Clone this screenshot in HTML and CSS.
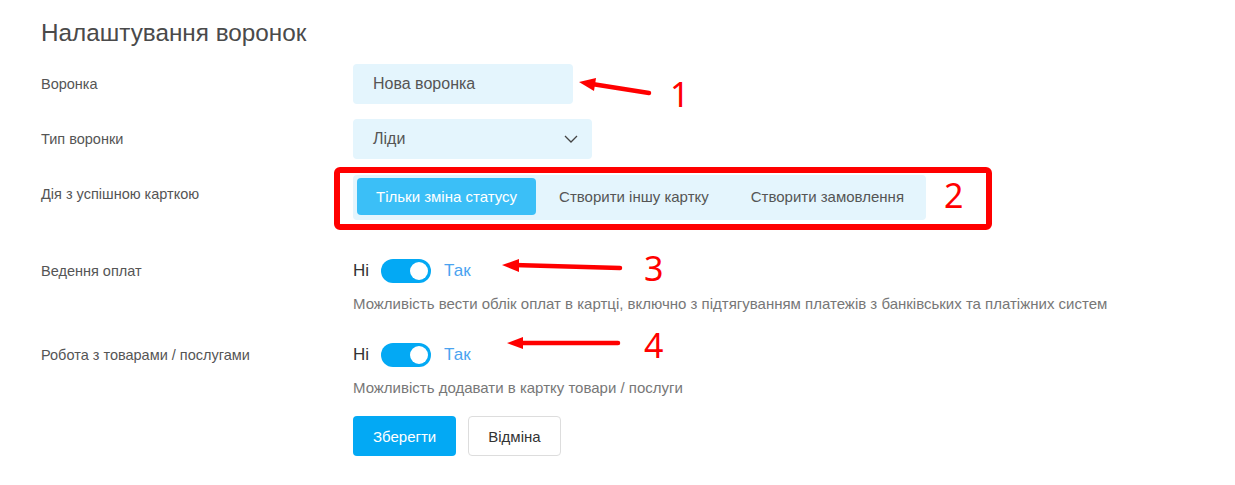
FILE: index.html
```html
<!DOCTYPE html>
<html>
<head>
  <meta name="viewport" content="width=device-width, initial-scale=1.0">
  <link rel="stylesheet" href="styles.css">
</head>
<body>

  <div class="settings">
    <h1 class="settings-title">Налаштування воронок</h1>

    <div class="form-row">
      <div class="form-label">Воронка</div>
      <div class="form-field">
        <div class="text-input">Нова воронка</div>
      </div>
    </div>

    <div class="form-row">
      <div class="form-label">Тип воронки</div>
      <div class="form-field">
        <div class="select-input">
          <span>Ліди</span>
          <svg class="chevron" width="14" height="8" viewBox="0 0 14 8">
            <path d="M1 1 L7 7 L13 1" fill="none" stroke="#444" stroke-width="1.3"/>
          </svg>
        </div>
      </div>
    </div>

    <div class="form-row row-segment">
      <div class="form-label">Дія з успішною карткою</div>
      <div class="form-field">
        <div class="segment">
          <div class="segment-item active">Тільки зміна статусу</div>
          <div class="segment-item">Створити іншу картку</div>
          <div class="segment-item">Створити замовлення</div>
        </div>
      </div>
    </div>

    <div class="form-row row-toggle">
      <div class="form-label">Ведення оплат</div>
      <div class="form-field">
        <div class="toggle-line">
          <span class="toggle-no">Ні</span>
          <span class="toggle on"><span class="knob"></span></span>
          <span class="toggle-yes">Так</span>
        </div>
        <div class="hint">Можливість вести облік оплат в картці, включно з підтягуванням платежів з банківських та платіжних систем</div>
      </div>
    </div>

    <div class="form-row row-toggle row-goods">
      <div class="form-label">Робота з товарами / послугами</div>
      <div class="form-field">
        <div class="toggle-line">
          <span class="toggle-no">Ні</span>
          <span class="toggle on"><span class="knob"></span></span>
          <span class="toggle-yes">Так</span>
        </div>
        <div class="hint">Можливість додавати в картку товари / послуги</div>
      </div>
    </div>

    <div class="form-row row-actions">
      <div class="form-label"></div>
      <div class="form-field actions">
        <button class="btn btn-primary">Зберегти</button>
        <button class="btn btn-default">Відміна</button>
      </div>
    </div>
  </div>

  <!-- annotations drawn over the screenshot -->
  <svg class="annotations" width="1235" height="485" viewBox="0 0 1235 485">
    <rect x="337" y="170" width="652" height="57" rx="3" fill="none" stroke="#ff0000" stroke-width="6"/>

    <line x1="649" y1="93" x2="592" y2="84" stroke="#ff0000" stroke-width="4.5" stroke-linecap="round"/>
    <polygon points="579,82 596,78 594,91" fill="#ff0000"/>
    <text x="670" y="107" class="note-num">1</text>

    <text x="944" y="208" class="note-num">2</text>

    <line x1="620" y1="268" x2="514" y2="265" stroke="#ff0000" stroke-width="4.5" stroke-linecap="round"/>
    <polygon points="502,265 519,259 519,272" fill="#ff0000"/>
    <text x="644" y="281" class="note-num">3</text>

    <line x1="618" y1="343" x2="519" y2="343" stroke="#ff0000" stroke-width="4.5" stroke-linecap="round"/>
    <polygon points="507,343 523,337 523,349" fill="#ff0000"/>
    <text x="644" y="358" class="note-num">4</text>
  </svg>

</body>
</html>
```

FILE: styles.css
```css
body {
  margin: 0;
  font-family: 'Liberation Sans', Arial, sans-serif;
  background: #fff;
  color: #555;
}

.settings {
  padding: 20px 41px;
}

.settings-title {
  margin: 0 0 18px 0;
  font-size: 24.3px;
  line-height: 26px;
  font-weight: normal;
  color: #4a4a4a;
}

/* one label + field per row */
.form-row {
  display: flex;
  align-items: flex-start;
  margin-bottom: 15px;
}

.form-label {
  width: 312px;
  flex-shrink: 0;
  font-size: 14.5px;
  line-height: 40px;
  color: #555;
}

.form-field {
  display: flex;
  flex-direction: column;
}

.text-input,
.select-input {
  height: 40px;
  box-sizing: border-box;
  padding: 0 20px;
  background: #e4f5fd;
  border-radius: 4px;
  font-size: 16px;
  line-height: 40px;
  color: #555;
}

.text-input {
  width: 220px;
}

.select-input {
  width: 239px;
  display: flex;
  justify-content: space-between;
  align-items: center;
  padding-right: 14px;
}

.row-segment {
  margin-top: 16px;
  margin-bottom: 39px;
}

.row-segment .form-label {
  line-height: 38px;
}

.segment {
  display: flex;
  gap: 4px;
  padding: 3px 3px 5px 4px;
  background: #e4f5fd;
  border-radius: 4px;
}

.segment-item {
  padding: 0 19px;
  height: 37px;
  line-height: 37px;
  font-size: 15px;
  color: #555;
  border-radius: 4px;
}

.segment-item.active {
  background: #3bbff7;
  color: #fff;
}

.row-toggle .form-label {
  line-height: 24px;
}

.toggle-line {
  display: flex;
  align-items: center;
  height: 24px;
}

.toggle-no {
  font-size: 17px;
  color: #333;
  margin-right: 12px;
}

.toggle-yes {
  font-size: 17px;
  color: #4aa3f0;
  margin-left: 13px;
}

.toggle {
  position: relative;
  width: 50px;
  height: 24px;
  border-radius: 12px;
  background: #03a9f4;
}

.toggle .knob {
  position: absolute;
  top: 3px;
  right: 3px;
  width: 18px;
  height: 18px;
  border-radius: 50%;
  background: #fff;
}

.hint {
  margin-top: 11px;
  font-size: 15px;
  line-height: 20px;
  color: #777;
}

.row-goods {
  margin-top: 29px;
  margin-bottom: 18px;
}

.actions {
  flex-direction: row;
  gap: 12px;
}

.btn {
  height: 40px;
  padding: 0 20px;
  font-family: 'Liberation Sans', Arial, sans-serif;
  font-size: 15px;
  border-radius: 4px;
  cursor: pointer;
}

.btn-primary {
  background: #03a9f4;
  border: none;
  color: #fff;
}

.btn-default {
  padding: 0 19px;
  background: #fff;
  border: 1px solid #ddd;
  color: #333;
}

.annotations {
  position: absolute;
  top: 0;
  left: 0;
  pointer-events: none;
}

.note-num {
  font-family: 'Noto Sans', sans-serif;
  font-size: 34px;
  fill: #ff0000;
}
```
